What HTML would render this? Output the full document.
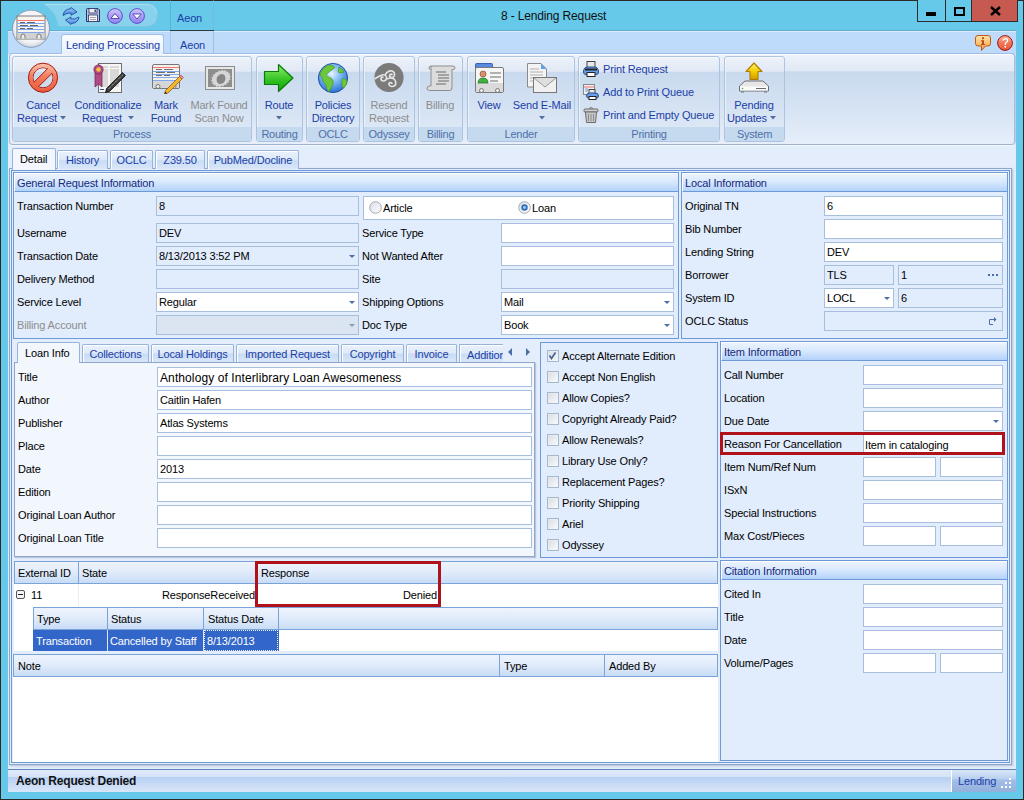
<!DOCTYPE html><html><head><meta charset="utf-8"><style>
*{margin:0;padding:0;box-sizing:border-box}
html,body{width:1024px;height:800px;overflow:hidden}
body{position:relative;background:#66c9e9;font-family:"Liberation Sans",sans-serif;font-size:11px;color:#000}
.a{position:absolute}
.t{white-space:nowrap;line-height:13px;letter-spacing:-0.15px}
.tb{background:#fff;border:1px solid #a9c0e0}
.tg{background:#dee8f6;border:1px solid #a9c0e0}
.grp{border:1px solid #adc4e0;border-radius:3px;background:linear-gradient(#edf2fa 0,#e1e9f5 17%,#c9daee 18%,#d3e1f2 55%,#e2ebf8 100%);box-shadow:inset 1px 1px 0 rgba(255,255,255,0.5)}
.gl{background:#c6daef;color:#4d70a8;text-align:center;line-height:13px;padding-top:1px;letter-spacing:-0.25px;white-space:nowrap}
</style></head><body>
<div class="a " style="left:0px;top:0px;width:1024px;height:1px;background:#2a2a2a"></div>
<div class="a " style="left:0px;top:0px;width:1px;height:800px;background:#2a2a2a"></div>
<div class="a " style="left:1023px;top:0px;width:1px;height:800px;background:#2a2a2a"></div>
<div class="a " style="left:0px;top:799px;width:1024px;height:1px;background:#2a2a2a"></div>
<div class="a " style="left:8px;top:31px;width:1008px;height:761px;background:#e3edfc"></div>
<div class="a " style="left:8px;top:31px;width:1008px;height:23px;background:#bfdbfc"></div>
<div class="a " style="left:8px;top:30px;width:1008px;height:1px;background:#5fb0d0"></div>
<div class="a " style="left:8px;top:31px;width:1008px;height:1px;background:#dcebfd"></div>
<svg class="a" style="left:38px;top:2px" width="122" height="26" viewBox="0 0 122 26">
<path d="M4 1.5 H108 Q119.5 1.5 119.5 13 Q119.5 24.5 108 24.5 H20 Q19 10 4 1.5 Z" fill="#88d2ee" stroke="#7cc4e0" stroke-width="1"/>
<path d="M8 2.5 H108 Q118 2.5 118.5 11" fill="none" stroke="#a8e0f4" stroke-width="1"/>
</svg>
<svg class="a" style="left:11px;top:9px" width="40" height="40" viewBox="0 0 40 40">
<defs><radialGradient id="ab" cx="50%" cy="45%" r="55%"><stop offset="0" stop-color="#ffffff"/><stop offset="0.75" stop-color="#f2f4f7"/><stop offset="1" stop-color="#cfd6de"/></radialGradient></defs>
<circle cx="20" cy="19.7" r="18.6" fill="url(#ab)" stroke="#8a9cb4" stroke-width="1"/>
<rect x="6" y="7" width="28" height="23" fill="#f7f5f0" stroke="#7a7a7a" stroke-width="1"/>
<line x1="6.5" y1="11.5" x2="33.5" y2="11.5" stroke="#f07878" stroke-width="1"/>
<line x1="6.5" y1="14.5" x2="33.5" y2="14.5" stroke="#7ea6ee" stroke-width="1"/>
<line x1="6.5" y1="17.5" x2="33.5" y2="17.5" stroke="#7ea6ee" stroke-width="1"/>
<line x1="6.5" y1="20.5" x2="33.5" y2="20.5" stroke="#7ea6ee" stroke-width="1"/>
<line x1="6.5" y1="23.5" x2="33.5" y2="23.5" stroke="#7ea6ee" stroke-width="1"/>
<path d="M9 13.5 H14 M16 13.5 H24 M9 16.5 H17 M19 16.5 H27 M9 19.5 H14 M16 19.5 H22" stroke="#666" stroke-width="1"/>
<rect x="6.5" y="24" width="27" height="5.5" fill="#d2d2d2"/>
<path d="M10 29.5 V27 A2 2 0 0 1 14 27 V29.5 M26 29.5 V27 A2 2 0 0 1 30 27 V29.5" fill="#eee" stroke="#777" stroke-width="1"/>
</svg>
<svg class="a" style="left:62px;top:7px" width="18" height="18" viewBox="0 0 18 18">
<defs><linearGradient id="rf" x1="0" y1="0" x2="0" y2="1"><stop offset="0" stop-color="#9cc8f4"/><stop offset="1" stop-color="#3f86dc"/></linearGradient></defs>
<path d="M1 8.5 Q2 2 8.5 1.8 L9 0.5 L15 5 L9 8.2 L9.2 6 Q5 5.5 1 8.5 Z" fill="url(#rf)" stroke="#1d4fa8" stroke-width="0.9" stroke-linejoin="round"/>
<path d="M17 10 Q16 16 9.5 16.5 L9 17.5 L3.5 13 L9 10 L8.8 12 Q13 12.8 17 10 Z" fill="url(#rf)" stroke="#1d4fa8" stroke-width="0.9" stroke-linejoin="round"/>
</svg>
<svg class="a" style="left:85px;top:7px" width="16" height="16" viewBox="0 0 16 16">
<path d="M1.5 2.5 Q1.5 1.5 2.5 1.5 H13 L14.5 3 V14.5 H1.5 Z" fill="#b8c2e0" stroke="#26336a" stroke-width="1"/>
<rect x="4" y="1.5" width="8" height="4.5" fill="#f0f0f0" stroke="#26336a" stroke-width="0.8"/>
<rect x="9.5" y="2.5" width="1.3" height="2.5" fill="#26336a"/>
<rect x="3.5" y="8" width="9" height="6.5" fill="#f6f6f6" stroke="#26336a" stroke-width="0.8"/>
<path d="M5 10.5 H11 M5 12.5 H11" stroke="#9a9a9a" stroke-width="0.9"/>
</svg>
<svg class="a" style="left:107px;top:8px" width="16" height="16" viewBox="0 0 16 16">
<defs><linearGradient id="gup" x1="0" y1="0" x2="0" y2="1"><stop offset="0" stop-color="#cfc8fb"/><stop offset="0.5" stop-color="#a99ef6"/><stop offset="1" stop-color="#9284ee"/></linearGradient></defs>
<circle cx="8" cy="8" r="7.4" fill="url(#gup)" stroke="#5e50c8" stroke-width="1"/>
<path d="M3.8 10.5 L8 5.5 L12.2 10.5 Z" fill="#fff" stroke="#4a3eb0" stroke-width="0.9" stroke-linejoin="round"/>
</svg>
<svg class="a" style="left:129px;top:8px" width="16" height="16" viewBox="0 0 16 16">
<defs><linearGradient id="gdown" x1="0" y1="0" x2="0" y2="1"><stop offset="0" stop-color="#cfc8fb"/><stop offset="0.5" stop-color="#a99ef6"/><stop offset="1" stop-color="#9284ee"/></linearGradient></defs>
<circle cx="8" cy="8" r="7.4" fill="url(#gdown)" stroke="#5e50c8" stroke-width="1"/>
<path d="M3.8 6 L8 11 L12.2 6 Z" fill="#fff" stroke="#4a3eb0" stroke-width="0.9" stroke-linejoin="round"/>
</svg>
<div class="a " style="left:170px;top:0px;width:1px;height:31px;background:#4aa8c8;opacity:0.6"></div>
<div class="a " style="left:213px;top:0px;width:1px;height:54px;background:#7fb0d8;opacity:0.6"></div>
<div class="a " style="left:170px;top:30px;width:44px;height:1px;background:#2b3a40"></div>
<div class="a " style="left:171px;top:31px;width:42px;height:22px;background:#c1dbf9"></div>
<div class="a " style="left:170px;top:31px;width:1px;height:23px;background:#a9c9ec"></div>
<div class="a t " style="left:177px;top:12px;color:#1b3ea6">Aeon</div>
<div class="a t " style="left:501px;top:10px;font-size:12px;color:#111;letter-spacing:-0.15px">8 - Lending Request</div>
<div class="a " style="left:917px;top:0px;width:101px;height:22px;border:1px solid #2c2c2c;border-top:none;background:#66c9e9"></div>
<div class="a " style="left:945px;top:0px;width:1px;height:22px;background:#2c2c2c"></div>
<div class="a " style="left:971px;top:0px;width:47px;height:22px;background:#c75a50;border:1px solid #2c2c2c;border-top:none"></div>
<div class="a " style="left:926px;top:12px;width:10px;height:4px;background:#000"></div>
<div class="a " style="left:954px;top:7px;width:11px;height:9px;border:2px solid #000"></div>
<svg class="a" style="left:990px;top:6px" width="11" height="10" viewBox="0 0 11 10"><path d="M1 1 L10 9 M10 1 L1 9" stroke="#000" stroke-width="2.4"/></svg>
<div class="a " style="left:61px;top:34px;width:103px;height:20px;background:linear-gradient(#fafcff,#eaf2fc);border:1px solid #9ebfe6;border-bottom:none;border-radius:3px 3px 0 0"></div>
<div class="a t " style="left:66px;top:39px;color:#1b3ea6">Lending Processing</div>
<div class="a t " style="left:180px;top:39px;color:#1b3ea6">Aeon</div>
<svg class="a" style="left:974px;top:34px" width="18" height="18" viewBox="0 0 18 18">
<defs><linearGradient id="gi" x1="0" y1="0" x2="0" y2="1"><stop offset="0" stop-color="#ffe6a8"/><stop offset="0.5" stop-color="#fdc070"/><stop offset="1" stop-color="#f7a040"/></linearGradient></defs>
<path d="M4 1.5 H14 Q16.5 1.5 16.5 4 V9.5 Q16.5 12 14 12 H11.5 L7.5 16.5 L7.5 12 H4 Q1.5 12 1.5 9.5 V4 Q1.5 1.5 4 1.5 Z" fill="url(#gi)" stroke="#c0581a" stroke-width="1"/>
<rect x="8" y="3.3" width="2" height="1.8" fill="#b84a22"/><path d="M7 6.3 H10 V10 H11 V11 H7 V10 H8 V7.3 H7 Z" fill="#b84a22"/>
</svg>
<svg class="a" style="left:997px;top:35px" width="17" height="17" viewBox="0 0 17 17">
<defs><linearGradient id="gh" x1="0" y1="0" x2="0" y2="1"><stop offset="0" stop-color="#fbb8a0"/><stop offset="0.5" stop-color="#f07858"/><stop offset="1" stop-color="#e45434"/></linearGradient></defs>
<circle cx="8" cy="8" r="7.4" fill="url(#gh)" stroke="#a01410" stroke-width="1"/>
<path d="M6 5.6 Q6.3 3.6 8.4 3.6 Q10.6 3.8 10.5 5.6 Q10.4 7 9 7.8 Q8.2 8.4 8.2 10" fill="none" stroke="#fff" stroke-width="1.3"/>
<rect x="7.5" y="11" width="1.5" height="1.6" fill="#fff"/>
</svg>
<div class="a " style="left:9px;top:53px;width:1006px;height:92px;background:linear-gradient(#eef3fb 0,#e0e9f5 19%,#c9daee 19.6%,#d4e2f3 55%,#e6eefa 100%);border:1px solid #9fbde6;border-bottom-color:#9fb3cc;border-radius:4px;box-shadow:inset 0 1px 0 #fff,0 1px 0 #f4f8fe,1px 0 1px #b8c8dc"></div>
<div class="a grp" style="left:12px;top:56px;width:240px;height:86px;"></div>
<div class="a gl" style="left:13px;top:127px;width:238px;height:14px;border-radius:0 0 2px 2px">Process</div>
<div class="a grp" style="left:256px;top:56px;width:47px;height:86px;"></div>
<div class="a gl" style="left:257px;top:127px;width:45px;height:14px;border-radius:0 0 2px 2px">Routing</div>
<div class="a grp" style="left:306px;top:56px;width:54px;height:86px;"></div>
<div class="a gl" style="left:307px;top:127px;width:52px;height:14px;border-radius:0 0 2px 2px">OCLC</div>
<div class="a grp" style="left:363px;top:56px;width:52px;height:86px;"></div>
<div class="a gl" style="left:364px;top:127px;width:50px;height:14px;border-radius:0 0 2px 2px">Odyssey</div>
<div class="a grp" style="left:418px;top:56px;width:45px;height:86px;"></div>
<div class="a gl" style="left:419px;top:127px;width:43px;height:14px;border-radius:0 0 2px 2px">Billing</div>
<div class="a grp" style="left:467px;top:56px;width:108px;height:86px;"></div>
<div class="a gl" style="left:468px;top:127px;width:106px;height:14px;border-radius:0 0 2px 2px">Lender</div>
<div class="a grp" style="left:578px;top:56px;width:142px;height:86px;"></div>
<div class="a gl" style="left:579px;top:127px;width:140px;height:14px;border-radius:0 0 2px 2px">Printing</div>
<div class="a grp" style="left:724px;top:56px;width:61px;height:86px;"></div>
<div class="a gl" style="left:725px;top:127px;width:59px;height:14px;border-radius:0 0 2px 2px">System</div>
<div class="a t" style="left:-17px;top:99px;width:120px;text-align:center;color:#1b3ea6">Cancel</div>
<div class="a t" style="left:17px;top:112px;color:#1b3ea6">Request</div>
<svg class="a" style="left:60px;top:116px" width="6" height="4"><path d="M0 0 H6 L3 3.5 Z" fill="#4f6fa0"/></svg>
<div class="a t" style="left:48px;top:99px;width:120px;text-align:center;color:#1b3ea6">Conditionalize</div>
<div class="a t" style="left:82px;top:112px;color:#1b3ea6">Request</div>
<svg class="a" style="left:128px;top:116px" width="6" height="4"><path d="M0 0 H6 L3 3.5 Z" fill="#4f6fa0"/></svg>
<div class="a t" style="left:106px;top:99px;width:120px;text-align:center;color:#1b3ea6">Mark</div>
<div class="a t" style="left:106px;top:112px;width:120px;text-align:center;color:#1b3ea6">Found</div>
<div class="a t" style="left:159px;top:99px;width:120px;text-align:center;color:#8d8d8d">Mark Found</div>
<div class="a t" style="left:159px;top:112px;width:120px;text-align:center;color:#8d8d8d">Scan Now</div>
<div class="a t" style="left:219px;top:99px;width:120px;text-align:center;color:#1b3ea6">Route</div>
<svg class="a" style="left:276px;top:116px" width="6" height="4"><path d="M0 0 H6 L3 3.5 Z" fill="#4f6fa0"/></svg>
<div class="a t" style="left:273px;top:99px;width:120px;text-align:center;color:#1b3ea6">Policies</div>
<div class="a t" style="left:273px;top:112px;width:120px;text-align:center;color:#1b3ea6">Directory</div>
<div class="a t" style="left:329px;top:99px;width:120px;text-align:center;color:#8d8d8d">Resend</div>
<div class="a t" style="left:329px;top:112px;width:120px;text-align:center;color:#8d8d8d">Request</div>
<div class="a t" style="left:380px;top:99px;width:120px;text-align:center;color:#8d8d8d">Billing</div>
<div class="a t" style="left:429px;top:99px;width:120px;text-align:center;color:#1b3ea6">View</div>
<div class="a t" style="left:482px;top:99px;width:120px;text-align:center;color:#1b3ea6">Send E-Mail</div>
<svg class="a" style="left:539px;top:116px" width="6" height="4"><path d="M0 0 H6 L3 3.5 Z" fill="#4f6fa0"/></svg>
<div class="a t " style="left:603px;top:63px;color:#1b3ea6">Print Request</div>
<div class="a t " style="left:603px;top:86px;color:#1b3ea6">Add to Print Queue</div>
<div class="a t " style="left:603px;top:109px;color:#1b3ea6">Print and Empty Queue</div>
<div class="a t" style="left:694px;top:99px;width:120px;text-align:center;color:#1b3ea6">Pending</div>
<div class="a t" style="left:727px;top:112px;color:#1b3ea6">Updates</div>
<svg class="a" style="left:770px;top:116px" width="6" height="4"><path d="M0 0 H6 L3 3.5 Z" fill="#4f6fa0"/></svg>
<div class="a " style="left:62px;top:53px;width:101px;height:2px;background:#eef3fb"></div>
<svg class="a" style="left:27px;top:62px" width="32" height="32" viewBox="0 0 32 32"><defs><linearGradient id="cr" gradientUnits="userSpaceOnUse" x1="0" y1="1" x2="0" y2="31"><stop offset="0" stop-color="#fcc8b4"/><stop offset="0.45" stop-color="#f37c5c"/><stop offset="1" stop-color="#e8583a"/></linearGradient></defs>
<circle cx="16" cy="15.75" r="10.1" fill="none" stroke="#a8180e" stroke-width="1"/>
<path d="M26.04 10.24 L21.51 5.71 L5.96 21.27 L10.49 25.79 Z" fill="url(#cr)" stroke="#a8180e" stroke-width="1"/>
<circle cx="16" cy="15.75" r="12.45" fill="none" stroke="url(#cr)" stroke-width="4"/>
<circle cx="16" cy="15.75" r="14.6" fill="none" stroke="#a8180e" stroke-width="1"/></svg>
<svg class="a" style="left:92px;top:62px" width="34" height="32" viewBox="0 0 34 32"><rect x="6.5" y="1.5" width="23" height="29" fill="#f6f6f6" stroke="#6e6e6e"/>
<rect x="9" y="4" width="7" height="2" fill="#d8d8d8"/><rect x="18" y="4" width="9" height="2" fill="#d8d8d8"/>
<rect x="9" y="7" width="7" height="18" fill="#d9d9d9"/><rect x="18" y="7" width="9" height="18" fill="#d9d9d9"/>
<line x1="8" y1="27.5" x2="12" y2="27.5" stroke="#3050a0"/>
<path d="M3 8 V25 L6.5 22 L10 25 V8 Z" fill="#b04a84" stroke="#7a2858" stroke-width="0.8"/>
<circle cx="6.5" cy="7.5" r="4.6" fill="#b04a84" stroke="#7a2858" stroke-width="0.8"/>
<circle cx="6.5" cy="7.5" r="2.3" fill="#f7c040"/>
<path d="M14.5 26.5 L30.5 10.5 L33.5 13.5 L17.5 29.5 L13.5 30.5 Z" fill="#3a3a3a" stroke="#111" stroke-width="0.8"/><path d="M16.5 27 L31 12.5" stroke="#d8d8d8" stroke-width="1" stroke-dasharray="1 1"/></svg>
<svg class="a" style="left:150px;top:62px" width="34" height="32" viewBox="0 0 34 32"><rect x="2.5" y="2.5" width="27" height="24" rx="1.5" fill="#f4f1ea" stroke="#777"/>
<line x1="3" y1="5.5" x2="29" y2="5.5" stroke="#f07878"/>
<line x1="3" y1="9.5" x2="29" y2="9.5" stroke="#80a8f0"/><line x1="3" y1="12.5" x2="29" y2="12.5" stroke="#80a8f0"/><line x1="3" y1="15.5" x2="29" y2="15.5" stroke="#80a8f0"/><line x1="3" y1="18.5" x2="29" y2="18.5" stroke="#80a8f0"/>
<path d="M6 7.5 H12 M14 7.5 H23 M6 10.5 H15 M17 10.5 H25 M6 13.5 H12 M14 13.5 H20" stroke="#707070" stroke-width="1"/>
<rect x="3" y="19" width="26" height="7" fill="#d6d6d6"/>
<circle cx="8" cy="24.5" r="2" fill="#eee" stroke="#777"/><circle cx="24" cy="24.5" r="2" fill="#eee" stroke="#777"/>
<path d="M15.5 28.5 L29.5 14.5 L32 17 L18 31 L14.5 32 Z" fill="#f4b828" stroke="#8a5a10" stroke-width="0.8"/>
<path d="M29.5 14.5 L31 13 L33.5 15.5 L32 17 Z" fill="#f08a8a" stroke="#a05050" stroke-width="0.6"/>
<path d="M14.5 32 L15.3 29.6 L16.9 31.2 Z" fill="#222"/></svg>
<svg class="a" style="left:204px;top:64px" width="32" height="28" viewBox="0 0 32 28"><defs><clipPath id="scl"><rect x="4" y="5" width="24" height="18"/></clipPath></defs>
<rect x="1.5" y="2.5" width="29" height="23" fill="#e6e6e6" stroke="#8c8c8c"/>
<rect x="4" y="5" width="24" height="18" fill="#8e8e8e"/>
<g clip-path="url(#scl)"><polygon points="26.3,9.6 25.4,11.4 27.0,12.3 25.6,13.9 26.6,15.4 24.7,16.5 25.0,18.3 22.8,18.9 22.4,20.8 20.3,20.7 19.2,22.5 17.4,21.8 15.7,23.2 14.4,22.0 12.4,22.9 11.8,21.3 9.6,21.6 9.7,19.8 7.7,19.4 8.6,17.6 7.0,16.7 8.4,15.1 7.4,13.6 9.3,12.5 9.0,10.7 11.2,10.1 11.6,8.2 13.7,8.3 14.8,6.5 16.6,7.2 18.3,5.8 19.6,7.0 21.6,6.1 22.2,7.7 24.4,7.4 24.3,9.2" fill="#d6d6d6"/>
<ellipse cx="17" cy="15" rx="4.3" ry="5.2" fill="#858585" transform="rotate(25 17 15)"/></g></svg>
<svg class="a" style="left:262px;top:62px" width="34" height="32" viewBox="0 0 34 32"><defs><linearGradient id="ga" x1="0" y1="0" x2="0" y2="1"><stop offset="0" stop-color="#8df06a"/><stop offset="0.6" stop-color="#2fc020"/><stop offset="1" stop-color="#12a010"/></linearGradient></defs>
<path d="M2.5 9.5 H16.5 V2.5 L31 16 L16.5 29.5 V22.5 H2.5 Z" fill="url(#ga)" stroke="#0d7a0d" stroke-width="1.2" stroke-linejoin="round"/></svg>
<svg class="a" style="left:316px;top:62px" width="34" height="32" viewBox="0 0 34 32"><defs><radialGradient id="gg" cx="45%" cy="35%" r="65%"><stop offset="0" stop-color="#e8f4ff"/><stop offset="0.5" stop-color="#7ab8f4"/><stop offset="1" stop-color="#2a70d0"/></radialGradient></defs>
<circle cx="17" cy="16" r="14.6" fill="url(#gg)" stroke="#2050a8" stroke-width="1"/>
<path d="M4 12 Q6 6 12 3 Q17 3 19 5 Q17 8 14 9 Q12 12 10 12 Q11 15 15 16 Q18 18 17 22 Q15 26 13 30 Q10 27 10 23 Q7 20 6 16 Z" fill="#6cc83a" stroke="#3a9020" stroke-width="0.6"/>
<path d="M23 5 Q27 7 28 10 Q25 12 22 10 Z" fill="#6cc83a" stroke="#3a9020" stroke-width="0.6"/>
<path d="M27 16 Q31 17 31 20 Q30 25 27 26 Q25 22 26 18 Z" fill="#6cc83a" stroke="#3a9020" stroke-width="0.6"/></svg>
<svg class="a" style="left:373px;top:62px" width="32" height="32" viewBox="0 0 32 32"><circle cx="16" cy="15.5" r="14.6" fill="#7b7b7b"/>
<path d="M1.5 17 Q6 14 9 13 Q13 12 13.5 15.5 Q13.5 19 10 19 Q7.5 18.5 8 16 Q8.8 14.5 10.5 15.5" fill="none" stroke="#e4e4e4" stroke-width="1.6"/>
<path d="M12 13 Q15 8 19 9 Q22 10 21.5 13.5 Q20.5 16 18 15.5 Q16 14.5 17 12.5 Q18.5 11.5 19.5 13" fill="none" stroke="#e4e4e4" stroke-width="1.6"/>
<path d="M14 17 Q18 15 21 17 Q24 20 22 23.5 Q19 25.5 16.5 23.5 Q15 21.5 17 20.5 Q19 20.5 19 22" fill="none" stroke="#e4e4e4" stroke-width="1.6"/></svg>
<svg class="a" style="left:426px;top:64px" width="32" height="28" viewBox="0 0 32 28"><path d="M5 2 H27 Q29 2 29 4 Q29 5.5 27 5.5 H26 V24 Q26 26.5 23.5 26.5 H3.5 Q1 26.5 1 24.5 Q1 22 3.5 22 H5 Z" fill="#dcdcdc" stroke="#8e8e8e"/>
<path d="M5 2 Q3 2 3 4 Q3 5.5 5 5.5" fill="#c8c8c8" stroke="#8e8e8e"/>
<path d="M10 8 H20 M12 11 H23 M12 14 H23 M12 17 H23 M10 20 H20" stroke="#6a6a6a" stroke-width="1.1"/></svg>
<svg class="a" style="left:474px;top:62px" width="32" height="32" viewBox="0 0 32 32"><rect x="1.5" y="1.5" width="17" height="5" rx="1" fill="#5a8ae0" stroke="#3a60b0"/>
<rect x="1.5" y="5.5" width="28" height="25" rx="1.5" fill="#f6f6f6" stroke="#7a7a7a"/>
<rect x="2" y="21" width="27" height="9" fill="#dadada"/>
<circle cx="7.5" cy="28.5" r="2" fill="#eee" stroke="#777"/><circle cx="23.5" cy="28.5" r="2" fill="#eee" stroke="#777"/>
<circle cx="9" cy="12" r="3" fill="#d89070" stroke="#8a5030" stroke-width="0.7"/>
<path d="M4 21 Q4 16 9 16 Q14 16 14 21 Z" fill="#40b040" stroke="#207020" stroke-width="0.7"/>
<path d="M16 11 H27 M16 15 H27 M16 19 H24" stroke="#9a9a9a" stroke-width="1.3"/></svg>
<svg class="a" style="left:526px;top:62px" width="32" height="32" viewBox="0 0 32 32"><path d="M1.5 1.5 H15 L20.5 7 V25 H1.5 Z" fill="#f4f4f4" stroke="#8a8a8a"/>
<path d="M15 1.5 V7 H20.5 Z" fill="#5aa0e8"/>
<path d="M4 7 H13 M4 10 H17 M4 13 H17 M4 16 H17 M4 19 H12" stroke="#b0b0b0" stroke-width="1"/>
<rect x="7.5" y="15.5" width="23" height="15" fill="#f0f0f0" stroke="#777"/>
<path d="M8 16 L19 25 L30 16" fill="#dedede" stroke="#999"/></svg>
<svg class="a" style="left:582px;top:60px" width="18" height="18" viewBox="0 0 18 18"><rect x="5" y="1.5" width="8" height="6" fill="#e8e8e8" stroke="#444"/>
<path d="M1.5 12 Q1.5 7 6 7 H12 Q16.5 7 16.5 12 Q16.5 14.5 14 14.5 H4 Q1.5 14.5 1.5 12 Z" fill="#6aa0e8" stroke="#2a4a8a"/>
<rect x="3" y="8.5" width="12" height="2" fill="#222"/>
<rect x="5" y="12.5" width="8" height="4" fill="#fff" stroke="#222"/></svg>
<svg class="a" style="left:582px;top:83px" width="18" height="18" viewBox="0 0 18 18"><rect x="1.5" y="1.5" width="11" height="10" fill="#f0f0f0" stroke="#888"/>
<path d="M2 4 H12" stroke="#f07070"/><path d="M3 6 H6 M3 8 H6" stroke="#6a9ae0"/>
<rect x="7" y="6.5" width="6" height="4" fill="#e8e8e8" stroke="#444"/>
<path d="M4.5 13 Q4.5 10 7.5 10 H13 Q16.5 10 16.5 13 Q16.5 15 14.5 15 H6.5 Q4.5 15 4.5 13 Z" fill="#6aa0e8" stroke="#2a4a8a"/>
<rect x="7" y="13.5" width="7" height="3" fill="#fff" stroke="#222"/></svg>
<svg class="a" style="left:583px;top:106px" width="16" height="18" viewBox="0 0 16 18"><path d="M6 2.5 Q8 0.5 10 2.5" fill="none" stroke="#777"/>
<rect x="1" y="3" width="14" height="3" rx="1" fill="#cfcfcf" stroke="#6a6a6a"/>
<path d="M2.5 6 H13.5 L12.5 16.5 H3.5 Z" fill="#c8c8c8" stroke="#6a6a6a"/>
<path d="M5.5 8 V15 M8 8 V15 M10.5 8 V15" stroke="#8a8a8a"/></svg>
<svg class="a" style="left:738px;top:62px" width="32" height="32" viewBox="0 0 32 32"><defs><linearGradient id="gy" x1="0" y1="0" x2="0" y2="1"><stop offset="0" stop-color="#fff27a"/><stop offset="0.5" stop-color="#f2d000"/><stop offset="1" stop-color="#d49a00"/></linearGradient></defs>
<path d="M16 1 L24 9.5 H20 V17.5 H12 V9.5 H8 Z" fill="url(#gy)" stroke="#b07a00" stroke-width="1.1" stroke-linejoin="round"/>
<path d="M7 19 H25 L30.5 24 V29 H1.5 V24 Z" fill="#e6e6e6" stroke="#6e6e6e"/>
<rect x="2" y="24.5" width="28" height="4" fill="#fafafa"/>
<circle cx="4.5" cy="26.5" r="0.8" fill="#40c040"/>
<path d="M18 26.5 H28" stroke="#6a6a6a" stroke-width="1"/>
<path d="M3 30 H6 M26 30 H29" stroke="#777"/></svg>
<div class="a " style="left:9px;top:168px;width:1003px;height:597px;border:1px solid #8ea6c9;background:#e3edfc;box-shadow:1px 1px 2px rgba(90,110,140,0.35)"></div>
<div class="a " style="left:11px;top:170px;width:999px;height:593px;border:1px solid #6d9ad6;background:#fff0"></div>
<div class="a " style="left:12px;top:148px;width:44px;height:22px;background:#f3f7fd;border:1px solid #98b3d8;border-bottom:none;border-radius:2px 2px 0 0"></div>
<div class="a t " style="left:20px;top:153px;">Detail</div>
<div class="a " style="left:57px;top:150px;width:51px;height:19px;background:linear-gradient(#e9f1fc 0,#dfeaf9 45%,#c9dcf5 55%,#d9e6f8 100%);border:1px solid #98b3d8;border-bottom:none;border-radius:2px 2px 0 0;box-shadow:inset 1px 1px 0 #fff"></div>
<div class="a t" style="left:57px;top:154px;width:51px;text-align:center;color:#1b3ea6">History</div>
<div class="a " style="left:110px;top:150px;width:43px;height:19px;background:linear-gradient(#e9f1fc 0,#dfeaf9 45%,#c9dcf5 55%,#d9e6f8 100%);border:1px solid #98b3d8;border-bottom:none;border-radius:2px 2px 0 0;box-shadow:inset 1px 1px 0 #fff"></div>
<div class="a t" style="left:110px;top:154px;width:43px;text-align:center;color:#1b3ea6">OCLC</div>
<div class="a " style="left:155px;top:150px;width:50px;height:19px;background:linear-gradient(#e9f1fc 0,#dfeaf9 45%,#c9dcf5 55%,#d9e6f8 100%);border:1px solid #98b3d8;border-bottom:none;border-radius:2px 2px 0 0;box-shadow:inset 1px 1px 0 #fff"></div>
<div class="a t" style="left:155px;top:154px;width:50px;text-align:center;color:#1b3ea6">Z39.50</div>
<div class="a " style="left:207px;top:150px;width:92px;height:19px;background:linear-gradient(#e9f1fc 0,#dfeaf9 45%,#c9dcf5 55%,#d9e6f8 100%);border:1px solid #98b3d8;border-bottom:none;border-radius:2px 2px 0 0;box-shadow:inset 1px 1px 0 #fff"></div>
<div class="a t" style="left:207px;top:154px;width:92px;text-align:center;color:#1b3ea6">PubMed/Docline</div>
<div class="a " style="left:13px;top:172px;width:666px;height:167px;border:1px solid #6d9ad6;background:#e1ecfc"></div>
<div class="a " style="left:14px;top:173px;width:664px;height:19px;background:linear-gradient(#ebf3fe,#d9e9fd 45%,#b3d2fa);border-top:1px solid #fff;border-left:1px solid #fff;border-bottom:1px solid #6d9ad6"></div>
<div class="a t " style="left:17px;top:177px;color:#15287a">General Request Information</div>
<div class="a t " style="left:17px;top:200px;color:#000">Transaction Number</div>
<div class="a " style="left:156px;top:196px;width:203px;height:20px;background:#e1ecfc;border:1px solid #a7bedd;"></div>
<div class="a t " style="left:159px;top:200px;">8</div>
<div class="a t " style="left:17px;top:227px;color:#000">Username</div>
<div class="a " style="left:156px;top:223px;width:203px;height:20px;background:#e1ecfc;border:1px solid #a7bedd;"></div>
<div class="a t " style="left:159px;top:227px;">DEV</div>
<div class="a t " style="left:17px;top:250px;color:#000">Transaction Date</div>
<div class="a " style="left:156px;top:246px;width:203px;height:20px;background:#e1ecfc;border:1px solid #a7bedd;"></div>
<div class="a t " style="left:159px;top:250px;">8/13/2013 3:52 PM</div>
<svg class="a" style="left:349px;top:255px" width="6" height="4"><path d="M0 0 H6 L3 3 Z" fill="#4a6ea8"/></svg>
<div class="a t " style="left:17px;top:273px;color:#000">Delivery Method</div>
<div class="a " style="left:156px;top:269px;width:203px;height:20px;background:#e1ecfc;border:1px solid #a7bedd;"></div>
<div class="a t " style="left:17px;top:296px;color:#000">Service Level</div>
<div class="a " style="left:156px;top:292px;width:203px;height:20px;background:#ffffff;border:1px solid #a7bedd;"></div>
<div class="a t " style="left:159px;top:296px;">Regular</div>
<svg class="a" style="left:349px;top:301px" width="6" height="4"><path d="M0 0 H6 L3 3 Z" fill="#4a6ea8"/></svg>
<div class="a t " style="left:17px;top:319px;color:#8d8d8d">Billing Account</div>
<div class="a " style="left:156px;top:315px;width:203px;height:20px;background:#dbe4f1;border:1px solid #a7bedd;"></div>
<svg class="a" style="left:349px;top:324px" width="6" height="4"><path d="M0 0 H6 L3 3 Z" fill="#8a9cb8"/></svg>
<div class="a " style="left:363px;top:196px;width:311px;height:24px;background:#fff;border:1px solid #a7bedd"></div>
<svg class="a" style="left:369px;top:201px" width="13" height="13"><defs><linearGradient id="rg" x1="0" y1="0" x2="1" y2="1"><stop offset="0" stop-color="#d8dde4"/><stop offset="1" stop-color="#ffffff"/></linearGradient></defs><circle cx="6.5" cy="6.5" r="5.8" fill="url(#rg)" stroke="#a2a9b4"/></svg>
<div class="a t " style="left:383px;top:202px;">Article</div>
<svg class="a" style="left:518px;top:201px" width="13" height="13"><defs><linearGradient id="rg" x1="0" y1="0" x2="1" y2="1"><stop offset="0" stop-color="#d8dde4"/><stop offset="1" stop-color="#ffffff"/></linearGradient></defs><circle cx="6.5" cy="6.5" r="5.8" fill="url(#rg)" stroke="#a2a9b4"/><circle cx="6.5" cy="6.5" r="3.2" fill="#2f6fb8"/><circle cx="6.5" cy="6.5" r="1.4" fill="#9fd0f4"/></svg>
<div class="a t " style="left:532px;top:202px;">Loan</div>
<div class="a t " style="left:362px;top:227px;color:#000">Service Type</div>
<div class="a " style="left:501px;top:223px;width:173px;height:20px;background:#ffffff;border:1px solid #a7bedd;"></div>
<div class="a t " style="left:362px;top:250px;color:#000">Not Wanted After</div>
<div class="a " style="left:501px;top:246px;width:173px;height:20px;background:#ffffff;border:1px solid #a7bedd;"></div>
<div class="a t " style="left:362px;top:273px;color:#000">Site</div>
<div class="a " style="left:501px;top:269px;width:173px;height:20px;background:#e1ecfc;border:1px solid #a7bedd;"></div>
<div class="a t " style="left:362px;top:296px;color:#000">Shipping Options</div>
<div class="a " style="left:501px;top:292px;width:173px;height:20px;background:#ffffff;border:1px solid #a7bedd;"></div>
<div class="a t " style="left:504px;top:296px;">Mail</div>
<svg class="a" style="left:664px;top:301px" width="6" height="4"><path d="M0 0 H6 L3 3 Z" fill="#4a6ea8"/></svg>
<div class="a t " style="left:362px;top:319px;color:#000">Doc Type</div>
<div class="a " style="left:501px;top:315px;width:173px;height:20px;background:#ffffff;border:1px solid #a7bedd;"></div>
<div class="a t " style="left:504px;top:319px;">Book</div>
<svg class="a" style="left:664px;top:324px" width="6" height="4"><path d="M0 0 H6 L3 3 Z" fill="#4a6ea8"/></svg>
<div class="a " style="left:681px;top:172px;width:327px;height:167px;border:1px solid #6d9ad6;background:#e1ecfc"></div>
<div class="a " style="left:682px;top:173px;width:325px;height:19px;background:linear-gradient(#ebf3fe,#d9e9fd 45%,#b3d2fa);border-top:1px solid #fff;border-left:1px solid #fff;border-bottom:1px solid #6d9ad6"></div>
<div class="a t " style="left:685px;top:177px;color:#15287a">Local Information</div>
<div class="a t " style="left:685px;top:200px;color:#000">Original TN</div>
<div class="a " style="left:824px;top:196px;width:179px;height:20px;background:#ffffff;border:1px solid #a7bedd;"></div>
<div class="a t " style="left:827px;top:200px;">6</div>
<div class="a t " style="left:685px;top:223px;color:#000">Bib Number</div>
<div class="a " style="left:824px;top:219px;width:179px;height:20px;background:#ffffff;border:1px solid #a7bedd;"></div>
<div class="a t " style="left:685px;top:246px;color:#000">Lending String</div>
<div class="a " style="left:824px;top:242px;width:179px;height:20px;background:#ffffff;border:1px solid #a7bedd;"></div>
<div class="a t " style="left:827px;top:246px;">DEV</div>
<div class="a t " style="left:685px;top:269px;color:#000">Borrower</div>
<div class="a " style="left:824px;top:265px;width:70px;height:20px;background:#e1ecfc;border:1px solid #a7bedd;"></div>
<div class="a t " style="left:827px;top:269px;">TLS</div>
<div class="a " style="left:898px;top:265px;width:105px;height:20px;background:#e1ecfc;border:1px solid #a7bedd;"></div>
<div class="a t " style="left:901px;top:269px;">1</div>
<div class="a " style="left:988px;top:274px;width:2px;height:2px;background:#4a6ea8"></div>
<div class="a " style="left:992px;top:274px;width:2px;height:2px;background:#4a6ea8"></div>
<div class="a " style="left:996px;top:274px;width:2px;height:2px;background:#4a6ea8"></div>
<div class="a t " style="left:685px;top:292px;color:#000">System ID</div>
<div class="a " style="left:824px;top:288px;width:70px;height:20px;background:#ffffff;border:1px solid #a7bedd;"></div>
<div class="a t " style="left:827px;top:292px;">LOCL</div>
<svg class="a" style="left:884px;top:297px" width="6" height="4"><path d="M0 0 H6 L3 3 Z" fill="#4a6ea8"/></svg>
<div class="a " style="left:898px;top:288px;width:105px;height:20px;background:#e1ecfc;border:1px solid #a7bedd;"></div>
<div class="a t " style="left:901px;top:292px;">6</div>
<div class="a t " style="left:685px;top:315px;color:#000">OCLC Status</div>
<div class="a " style="left:824px;top:311px;width:179px;height:20px;background:#e1ecfc;border:1px solid #a7bedd;"></div>
<svg class="a" style="left:986px;top:314px" width="12" height="12"><path d="M7 10.5 H3.5 V5.5 H9" fill="none" stroke="#4a6ea8" stroke-width="1"/><path d="M8 3 L10.5 5.5 L8 8 Z" fill="#4a6ea8"/></svg>
<div class="a " style="left:14px;top:362px;width:521px;height:195px;background:#f2f6fd;border:1px solid #8ea6c9;box-shadow:1px 1px 1px rgba(90,110,140,0.3)"></div>
<div class="a " style="left:17px;top:342px;width:63px;height:21px;background:#f2f6fd;border:1px solid #98b3d8;border-bottom:none;border-radius:2px 2px 0 0"></div>
<div class="a t " style="left:25px;top:347px;">Loan Info</div>
<div class="a " style="left:82px;top:344px;width:67px;height:18px;background:linear-gradient(#e9f1fc 0,#dfeaf9 45%,#c9dcf5 55%,#d9e6f8 100%);border:1px solid #98b3d8;border-bottom:none;border-radius:2px 2px 0 0;box-shadow:inset 1px 1px 0 #fff"></div>
<div class="a t" style="left:82px;top:348px;width:67px;text-align:center;color:#1b3ea6">Collections</div>
<div class="a " style="left:151px;top:344px;width:83px;height:18px;background:linear-gradient(#e9f1fc 0,#dfeaf9 45%,#c9dcf5 55%,#d9e6f8 100%);border:1px solid #98b3d8;border-bottom:none;border-radius:2px 2px 0 0;box-shadow:inset 1px 1px 0 #fff"></div>
<div class="a t" style="left:151px;top:348px;width:83px;text-align:center;color:#1b3ea6">Local Holdings</div>
<div class="a " style="left:236px;top:344px;width:103px;height:18px;background:linear-gradient(#e9f1fc 0,#dfeaf9 45%,#c9dcf5 55%,#d9e6f8 100%);border:1px solid #98b3d8;border-bottom:none;border-radius:2px 2px 0 0;box-shadow:inset 1px 1px 0 #fff"></div>
<div class="a t" style="left:236px;top:348px;width:103px;text-align:center;color:#1b3ea6">Imported Request</div>
<div class="a " style="left:341px;top:344px;width:63px;height:18px;background:linear-gradient(#e9f1fc 0,#dfeaf9 45%,#c9dcf5 55%,#d9e6f8 100%);border:1px solid #98b3d8;border-bottom:none;border-radius:2px 2px 0 0;box-shadow:inset 1px 1px 0 #fff"></div>
<div class="a t" style="left:341px;top:348px;width:63px;text-align:center;color:#1b3ea6">Copyright</div>
<div class="a " style="left:406px;top:344px;width:51px;height:18px;background:linear-gradient(#e9f1fc 0,#dfeaf9 45%,#c9dcf5 55%,#d9e6f8 100%);border:1px solid #98b3d8;border-bottom:none;border-radius:2px 2px 0 0;box-shadow:inset 1px 1px 0 #fff"></div>
<div class="a t" style="left:406px;top:348px;width:51px;text-align:center;color:#1b3ea6">Invoice</div>
<div class="a " style="left:459px;top:344px;width:44px;height:18px;background:linear-gradient(#e9f1fc 0,#dfeaf9 45%,#c9dcf5 55%,#d9e6f8 100%);border:1px solid #98b3d8;border-bottom:none;border-right:none;box-shadow:inset 1px 1px 0 #fff;overflow:hidden"><div class="t" style="position:absolute;left:7px;top:4px;color:#1b3ea6">Additional</div></div>
<svg class="a" style="left:508px;top:348px" width="5" height="8"><path d="M4 0 V8 L0 4 Z" fill="#4a6ea8"/></svg>
<svg class="a" style="left:526px;top:348px" width="5" height="8"><path d="M0 0 V8 L4 4 Z" fill="#4a6ea8"/></svg>
<div class="a t " style="left:18px;top:371px;color:#000">Title</div>
<div class="a " style="left:157px;top:367px;width:375px;height:20px;background:#ffffff;border:1px solid #a7bedd;"></div>
<div class="a t " style="left:18px;top:394px;color:#000">Author</div>
<div class="a " style="left:157px;top:390px;width:375px;height:20px;background:#ffffff;border:1px solid #a7bedd;"></div>
<div class="a t " style="left:160px;top:394px;">Caitlin Hafen</div>
<div class="a t " style="left:18px;top:417px;color:#000">Publisher</div>
<div class="a " style="left:157px;top:413px;width:375px;height:20px;background:#ffffff;border:1px solid #a7bedd;"></div>
<div class="a t " style="left:160px;top:417px;">Atlas Systems</div>
<div class="a t " style="left:18px;top:440px;color:#000">Place</div>
<div class="a " style="left:157px;top:436px;width:375px;height:20px;background:#ffffff;border:1px solid #a7bedd;"></div>
<div class="a t " style="left:18px;top:463px;color:#000">Date</div>
<div class="a " style="left:157px;top:459px;width:375px;height:20px;background:#ffffff;border:1px solid #a7bedd;"></div>
<div class="a t " style="left:160px;top:463px;">2013</div>
<div class="a t " style="left:18px;top:486px;color:#000">Edition</div>
<div class="a " style="left:157px;top:482px;width:375px;height:20px;background:#ffffff;border:1px solid #a7bedd;"></div>
<div class="a t " style="left:18px;top:509px;color:#000">Original Loan Author</div>
<div class="a " style="left:157px;top:505px;width:375px;height:20px;background:#ffffff;border:1px solid #a7bedd;"></div>
<div class="a t " style="left:18px;top:532px;color:#000">Original Loan Title</div>
<div class="a " style="left:157px;top:528px;width:375px;height:20px;background:#ffffff;border:1px solid #a7bedd;"></div>
<div class="a t " style="left:160px;top:372px;font-size:12px;letter-spacing:0.1px">Anthology of Interlibrary Loan Awesomeness</div>
<div class="a " style="left:540px;top:342px;width:178px;height:216px;border:1px solid #6d9ad6;background:#e1ecfc"></div>
<svg class="a" style="left:547px;top:350px" width="12" height="12"><defs><linearGradient id="cbg" x1="0" y1="0" x2="1" y2="1"><stop offset="0" stop-color="#d6dbe3"/><stop offset="1" stop-color="#fbfcfd"/></linearGradient></defs><rect x="0.5" y="0.5" width="11" height="11" fill="url(#cbg)" stroke="#a8b8cc"/><rect x="1.5" y="1.5" width="9" height="9" fill="none" stroke="#f4f6f8" stroke-width="0.6" opacity="0.6"/><path d="M2.5 5.5 L4.5 8.5 L8.5 2.5" fill="none" stroke="#4a6494" stroke-width="1.7"/></svg>
<div class="a t " style="left:562px;top:350px;">Accept Alternate Edition</div>
<svg class="a" style="left:547px;top:371px" width="12" height="12"><defs><linearGradient id="cbg" x1="0" y1="0" x2="1" y2="1"><stop offset="0" stop-color="#d6dbe3"/><stop offset="1" stop-color="#fbfcfd"/></linearGradient></defs><rect x="0.5" y="0.5" width="11" height="11" fill="url(#cbg)" stroke="#a8b8cc"/><rect x="1.5" y="1.5" width="9" height="9" fill="none" stroke="#f4f6f8" stroke-width="0.6" opacity="0.6"/></svg>
<div class="a t " style="left:562px;top:371px;">Accept Non English</div>
<svg class="a" style="left:547px;top:392px" width="12" height="12"><defs><linearGradient id="cbg" x1="0" y1="0" x2="1" y2="1"><stop offset="0" stop-color="#d6dbe3"/><stop offset="1" stop-color="#fbfcfd"/></linearGradient></defs><rect x="0.5" y="0.5" width="11" height="11" fill="url(#cbg)" stroke="#a8b8cc"/><rect x="1.5" y="1.5" width="9" height="9" fill="none" stroke="#f4f6f8" stroke-width="0.6" opacity="0.6"/></svg>
<div class="a t " style="left:562px;top:392px;">Allow Copies?</div>
<svg class="a" style="left:547px;top:413px" width="12" height="12"><defs><linearGradient id="cbg" x1="0" y1="0" x2="1" y2="1"><stop offset="0" stop-color="#d6dbe3"/><stop offset="1" stop-color="#fbfcfd"/></linearGradient></defs><rect x="0.5" y="0.5" width="11" height="11" fill="url(#cbg)" stroke="#a8b8cc"/><rect x="1.5" y="1.5" width="9" height="9" fill="none" stroke="#f4f6f8" stroke-width="0.6" opacity="0.6"/></svg>
<div class="a t " style="left:562px;top:413px;">Copyright Already Paid?</div>
<svg class="a" style="left:547px;top:434px" width="12" height="12"><defs><linearGradient id="cbg" x1="0" y1="0" x2="1" y2="1"><stop offset="0" stop-color="#d6dbe3"/><stop offset="1" stop-color="#fbfcfd"/></linearGradient></defs><rect x="0.5" y="0.5" width="11" height="11" fill="url(#cbg)" stroke="#a8b8cc"/><rect x="1.5" y="1.5" width="9" height="9" fill="none" stroke="#f4f6f8" stroke-width="0.6" opacity="0.6"/></svg>
<div class="a t " style="left:562px;top:434px;">Allow Renewals?</div>
<svg class="a" style="left:547px;top:455px" width="12" height="12"><defs><linearGradient id="cbg" x1="0" y1="0" x2="1" y2="1"><stop offset="0" stop-color="#d6dbe3"/><stop offset="1" stop-color="#fbfcfd"/></linearGradient></defs><rect x="0.5" y="0.5" width="11" height="11" fill="url(#cbg)" stroke="#a8b8cc"/><rect x="1.5" y="1.5" width="9" height="9" fill="none" stroke="#f4f6f8" stroke-width="0.6" opacity="0.6"/></svg>
<div class="a t " style="left:562px;top:455px;">Library Use Only?</div>
<svg class="a" style="left:547px;top:476px" width="12" height="12"><defs><linearGradient id="cbg" x1="0" y1="0" x2="1" y2="1"><stop offset="0" stop-color="#d6dbe3"/><stop offset="1" stop-color="#fbfcfd"/></linearGradient></defs><rect x="0.5" y="0.5" width="11" height="11" fill="url(#cbg)" stroke="#a8b8cc"/><rect x="1.5" y="1.5" width="9" height="9" fill="none" stroke="#f4f6f8" stroke-width="0.6" opacity="0.6"/></svg>
<div class="a t " style="left:562px;top:476px;">Replacement Pages?</div>
<svg class="a" style="left:547px;top:497px" width="12" height="12"><defs><linearGradient id="cbg" x1="0" y1="0" x2="1" y2="1"><stop offset="0" stop-color="#d6dbe3"/><stop offset="1" stop-color="#fbfcfd"/></linearGradient></defs><rect x="0.5" y="0.5" width="11" height="11" fill="url(#cbg)" stroke="#a8b8cc"/><rect x="1.5" y="1.5" width="9" height="9" fill="none" stroke="#f4f6f8" stroke-width="0.6" opacity="0.6"/></svg>
<div class="a t " style="left:562px;top:497px;">Priority Shipping</div>
<svg class="a" style="left:547px;top:518px" width="12" height="12"><defs><linearGradient id="cbg" x1="0" y1="0" x2="1" y2="1"><stop offset="0" stop-color="#d6dbe3"/><stop offset="1" stop-color="#fbfcfd"/></linearGradient></defs><rect x="0.5" y="0.5" width="11" height="11" fill="url(#cbg)" stroke="#a8b8cc"/><rect x="1.5" y="1.5" width="9" height="9" fill="none" stroke="#f4f6f8" stroke-width="0.6" opacity="0.6"/></svg>
<div class="a t " style="left:562px;top:518px;">Ariel</div>
<svg class="a" style="left:547px;top:539px" width="12" height="12"><defs><linearGradient id="cbg" x1="0" y1="0" x2="1" y2="1"><stop offset="0" stop-color="#d6dbe3"/><stop offset="1" stop-color="#fbfcfd"/></linearGradient></defs><rect x="0.5" y="0.5" width="11" height="11" fill="url(#cbg)" stroke="#a8b8cc"/><rect x="1.5" y="1.5" width="9" height="9" fill="none" stroke="#f4f6f8" stroke-width="0.6" opacity="0.6"/></svg>
<div class="a t " style="left:562px;top:539px;">Odyssey</div>
<div class="a " style="left:720px;top:341px;width:288px;height:217px;border:1px solid #6d9ad6;background:#e1ecfc"></div>
<div class="a " style="left:721px;top:342px;width:286px;height:19px;background:linear-gradient(#ebf3fe,#d9e9fd 45%,#b3d2fa);border-top:1px solid #fff;border-left:1px solid #fff;border-bottom:1px solid #6d9ad6"></div>
<div class="a t " style="left:724px;top:346px;color:#15287a">Item Information</div>
<div class="a t " style="left:724px;top:369px;color:#000">Call Number</div>
<div class="a " style="left:863px;top:365px;width:140px;height:20px;background:#ffffff;border:1px solid #a7bedd;"></div>
<div class="a t " style="left:724px;top:392px;color:#000">Location</div>
<div class="a " style="left:863px;top:388px;width:140px;height:20px;background:#ffffff;border:1px solid #a7bedd;"></div>
<div class="a t " style="left:724px;top:415px;color:#000">Due Date</div>
<div class="a " style="left:863px;top:411px;width:140px;height:20px;background:#ffffff;border:1px solid #a7bedd;"></div>
<svg class="a" style="left:993px;top:420px" width="6" height="4"><path d="M0 0 H6 L3 3 Z" fill="#4a6ea8"/></svg>
<div class="a t " style="left:724px;top:438px;color:#000">Reason For Cancellation</div>
<div class="a " style="left:863px;top:434px;width:140px;height:20px;background:#ffffff;border:1px solid #a7bedd;"></div>
<div class="a t " style="left:724px;top:461px;color:#000">Item Num/Ref Num</div>
<div class="a " style="left:863px;top:457px;width:73px;height:20px;background:#ffffff;border:1px solid #a7bedd;"></div>
<div class="a " style="left:940px;top:457px;width:63px;height:20px;background:#ffffff;border:1px solid #a7bedd;"></div>
<div class="a t " style="left:724px;top:484px;color:#000">ISxN</div>
<div class="a " style="left:863px;top:480px;width:140px;height:20px;background:#ffffff;border:1px solid #a7bedd;"></div>
<div class="a t " style="left:724px;top:507px;color:#000">Special Instructions</div>
<div class="a " style="left:863px;top:503px;width:140px;height:20px;background:#ffffff;border:1px solid #a7bedd;"></div>
<div class="a t " style="left:724px;top:530px;color:#000">Max Cost/Pieces</div>
<div class="a " style="left:863px;top:526px;width:73px;height:20px;background:#ffffff;border:1px solid #a7bedd;"></div>
<div class="a " style="left:940px;top:526px;width:63px;height:20px;background:#ffffff;border:1px solid #a7bedd;"></div>
<div class="a t " style="left:865px;top:439px;">Item in cataloging</div>
<div class="a " style="left:720px;top:432px;width:285px;height:23px;border:3px solid #b0121c"></div>
<div class="a " style="left:720px;top:560px;width:288px;height:201px;border:1px solid #6d9ad6;background:#e1ecfc"></div>
<div class="a " style="left:721px;top:561px;width:286px;height:19px;background:linear-gradient(#ebf3fe,#d9e9fd 45%,#b3d2fa);border-top:1px solid #fff;border-left:1px solid #fff;border-bottom:1px solid #6d9ad6"></div>
<div class="a t " style="left:724px;top:565px;color:#15287a">Citation Information</div>
<div class="a t " style="left:724px;top:588px;color:#000">Cited In</div>
<div class="a " style="left:863px;top:584px;width:140px;height:20px;background:#ffffff;border:1px solid #a7bedd;"></div>
<div class="a t " style="left:724px;top:611px;color:#000">Title</div>
<div class="a " style="left:863px;top:607px;width:140px;height:20px;background:#ffffff;border:1px solid #a7bedd;"></div>
<div class="a t " style="left:724px;top:634px;color:#000">Date</div>
<div class="a " style="left:863px;top:630px;width:140px;height:20px;background:#ffffff;border:1px solid #a7bedd;"></div>
<div class="a t " style="left:724px;top:657px;color:#000">Volume/Pages</div>
<div class="a " style="left:863px;top:653px;width:73px;height:20px;background:#ffffff;border:1px solid #a7bedd;"></div>
<div class="a " style="left:940px;top:653px;width:63px;height:20px;background:#ffffff;border:1px solid #a7bedd;"></div>
<div class="a " style="left:14px;top:561px;width:704px;height:23px;background:linear-gradient(#eef4fd 0,#e0ebfa 50%,#c8dcf7 100%);border:1px solid #7aa3d8"></div>
<div class="a " style="left:78px;top:561px;width:1px;height:23px;background:#7aa3d8"></div>
<div class="a t " style="left:18px;top:567px;">External ID</div>
<div class="a t " style="left:82px;top:567px;">State</div>
<div class="a " style="left:14px;top:584px;width:704px;height:67px;background:#fff"></div>
<div class="a " style="left:78px;top:584px;width:1px;height:22px;background:#e6eef8"></div>
<svg class="a" style="left:16px;top:590px" width="9" height="9"><rect x="0.5" y="0.5" width="8" height="8" rx="1.5" fill="#f4f4f4" stroke="#555"/><line x1="2" y1="4.5" x2="7" y2="4.5" stroke="#222"/></svg>
<div class="a t " style="left:31px;top:589px;">11</div>
<div class="a t " style="left:162px;top:589px;">ResponseReceived</div>
<div class="a t " style="left:403px;top:589px;">Denied</div>
<div class="a " style="left:33px;top:607px;width:685px;height:23px;background:linear-gradient(#eef4fd 0,#e0ebfa 50%,#c8dcf7 100%);border:1px solid #7aa3d8"></div>
<div class="a " style="left:107px;top:607px;width:1px;height:23px;background:#7aa3d8"></div>
<div class="a " style="left:203px;top:607px;width:1px;height:23px;background:#7aa3d8"></div>
<div class="a " style="left:278px;top:607px;width:1px;height:23px;background:#7aa3d8"></div>
<div class="a t " style="left:37px;top:613px;">Type</div>
<div class="a t " style="left:111px;top:613px;">Status</div>
<div class="a t " style="left:208px;top:613px;">Status Date</div>
<div class="a " style="left:33px;top:630px;width:246px;height:21px;background:#3366c9"></div>
<div class="a " style="left:107px;top:630px;width:1px;height:21px;background:#e0e8f8"></div>
<div class="a " style="left:203px;top:630px;width:1px;height:21px;background:#e0e8f8"></div>
<div class="a " style="left:204px;top:630px;width:74px;height:21px;border:1px dotted #e8eef8"></div>
<div class="a t " style="left:36px;top:635px;color:#fff">Transaction</div>
<div class="a t " style="left:110px;top:635px;color:#fff">Cancelled by Staff</div>
<div class="a t " style="left:207px;top:635px;color:#fff">8/13/2013</div>
<div class="a t " style="left:261px;top:567px;">Response</div>
<div class="a " style="left:255px;top:561px;width:186px;height:46px;border:3px solid #b0121c"></div>
<div class="a " style="left:13px;top:654px;width:705px;height:23px;background:linear-gradient(#eef4fd 0,#e0ebfa 50%,#c8dcf7 100%);border:1px solid #7aa3d8"></div>
<div class="a " style="left:499px;top:654px;width:1px;height:23px;background:#7aa3d8"></div>
<div class="a " style="left:604px;top:654px;width:1px;height:23px;background:#7aa3d8"></div>
<div class="a t " style="left:18px;top:660px;">Note</div>
<div class="a t " style="left:504px;top:660px;">Type</div>
<div class="a t " style="left:609px;top:660px;">Added By</div>
<div class="a " style="left:13px;top:677px;width:705px;height:85px;background:#fff"></div>
<div class="a " style="left:8px;top:769px;width:1008px;height:1px;background:#5f86bf"></div>
<div class="a " style="left:8px;top:770px;width:943px;height:22px;background:linear-gradient(#dfeafa 0,#d6e4f8 30%,#b6d0f4 32%,#cbdcf5 70%,#d9e6f8 100%)"></div>
<div class="a t " style="left:16px;top:775px;font-weight:bold;letter-spacing:-0.2px;font-size:12px;color:#111">Aeon Request Denied</div>
<div class="a " style="left:951px;top:770px;width:1px;height:22px;background:#fff"></div>
<div class="a " style="left:952px;top:770px;width:64px;height:22px;background:linear-gradient(#d9e6f7 0,#b9d0ef 40%,#a3bfe8 45%,#93b0dc 100%)"></div>
<div class="a t " style="left:958px;top:775px;color:#1b3ea6">Lending</div>
<div class="a " style="left:1009px;top:778px;width:2px;height:2px;background:#fff"></div>
<div class="a " style="left:1005px;top:782px;width:2px;height:2px;background:#fff"></div>
<div class="a " style="left:1009px;top:782px;width:2px;height:2px;background:#fff"></div>
<div class="a " style="left:1001px;top:786px;width:2px;height:2px;background:#fff"></div>
<div class="a " style="left:1005px;top:786px;width:2px;height:2px;background:#fff"></div>
<div class="a " style="left:1009px;top:786px;width:2px;height:2px;background:#fff"></div>
</body></html>
